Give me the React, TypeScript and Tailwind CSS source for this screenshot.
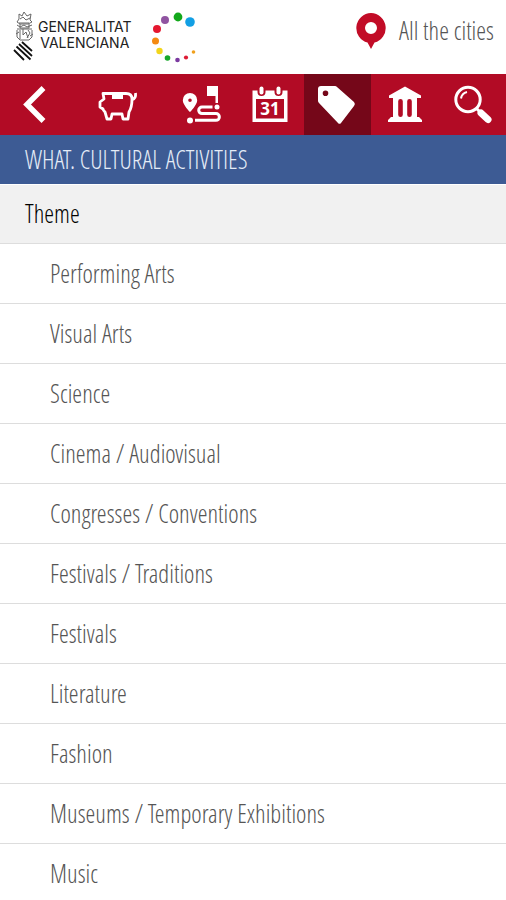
import type { ReactNode } from "react";

const themes = [
  "Performing Arts",
  "Visual Arts",
  "Science",
  "Cinema / Audiovisual",
  "Congresses / Conventions",
  "Festivals / Traditions",
  "Festivals",
  "Literature",
  "Fashion",
  "Museums / Temporary Exhibitions",
  "Music",
];

const dots: [number, number, number, string][] = [
  [13, 10, 4, "#9054a1"],
  [26, 7, 4.4, "#13a81b"],
  [38, 12, 4.8, "#129fe4"],
  [5, 19, 4, "#e5172f"],
  [3.5, 31, 3.5, "#f48a12"],
  [7.5, 41, 3.2, "#f2d51c"],
  [15.5, 48, 2.8, "#17a82b"],
  [25.5, 50, 2.3, "#7b3aa0"],
  [34, 47.5, 2.1, "#dd1c35"],
  [41.5, 42, 1.8, "#f0a01c"],
];

function Crest() {
  return (
    <svg width="22" height="50" viewBox="0 0 22 50" fill="none" stroke="#666" strokeWidth="1" aria-hidden="true">
      <path
        transform="translate(2 -1)"
        d="M5 3l3 2 2-4 3 4 4-2-1 6 2 2-4 2H6l-3-2 2-3zM6 8l3-2 3 3 4-2M5 12h10M3 14l3 2 4-2 3 2 5-2M6 13v4h9v-4M3 18h15M3 19v7l3 3h9l3-3v-7M6 19v9M9 18v6l3-3 2 6M14 19l2 3-3 5M2 23l3-2M16 25l3-2"
      />
      <g stroke="#111" strokeWidth="1.8">
        <path d="M10 30l10 9M7 32l13 12M4.500 34.500l14 13M2 38l10 10" />
      </g>
    </svg>
  );
}

function DotRing() {
  return (
    <svg width="44" height="54" viewBox="0 0 44 54" aria-hidden="true">
      {dots.map(([x, y, r, color]) => (
        <circle key={color} cx={x} cy={y} r={r} fill={color} />
      ))}
    </svg>
  );
}

function Icon({ children }: { children: ReactNode }) {
  return (
    <svg width="40" height="40" viewBox="0 0 40 40" fill="none" stroke="white" aria-hidden="true">
      {children}
    </svg>
  );
}

const tabs = [
  {
    label: "Back",
    size: "flex-[2]",
    icon: <path d="M29.500 3L13 19.500 29.500 36" strokeWidth="5.500" />,
  },
  {
    label: "Free",
    size: "flex-[3]",
    icon: (
      <g strokeWidth="2.800" strokeLinejoin="round">
        <path d="M5 8.500h23c4 0 6 2 6 5.500 0 6-1 10-3 13l-1 7h-5l-1-5H14l-1 5H9l-2-7c-1-1-2-2-2-3l-3-2v-5l4-3zM34 15c3-1 4-3 3.500-7" />
        <path d="M14 12h11" strokeWidth="4" />
      </g>
    ),
  },
  {
    label: "Route",
    size: "flex-[2]",
    icon: (
      <g>
        <path
          d="M8 8a7.200 7.200 0 0 0-7.200 7.200C.8 20 8 27 8 27s7.200-7 7.200-11.800A7.200 7.200 0 0 0 8 8zm0 5.500a1.800 1.800 0 1 1 0 3.600 1.800 1.800 0 0 1 0-3.600z"
          fill="white"
          fillRule="evenodd"
          stroke="none"
        />
        <path d="M25 1h11v17h-2.500v-7H25z" fill="white" stroke="none" />
        <circle cx="35" cy="22" r="2.500" fill="white" stroke="none" />
        <circle cx="8" cy="35.500" r="3" fill="white" stroke="none" />
        <path d="M30.500 22H20a3.300 3.300 0 0 0 0 6.600h14a3.300 3.300 0 0 1 0 6.700H13" strokeWidth="3" />
      </g>
    ),
  },
  {
    label: "When",
    size: "flex-[2]",
    icon: (
      <g>
        <path
          d="M2.500 5.500h5V7a4 4 0 0 0 8 0V5.500h9V7a4 4 0 0 0 8 0V5.500h5V37h-35zM6 14v19.500h28V14z"
          fill="white"
          fillRule="evenodd"
          stroke="none"
        />
        <rect x="9.500" y="1.500" width="4" height="8" rx="2" fill="white" stroke="none" />
        <rect x="26.500" y="1.500" width="4" height="8" rx="2" fill="white" stroke="none" />
        <text
          x="20"
          y="30"
          fill="white"
          stroke="none"
          textAnchor="middle"
          className="font-['Open_Sans',sans-serif] text-[17px] font-bold"
        >
          31
        </text>
      </g>
    ),
  },
  {
    label: "What",
    size: "flex-[2]",
    icon: (
      <path
        d="M4 1h14a3 3 0 0 1 2 1l17 15a3 3 0 0 1 0 4L24 38a2 2 0 0 1-3 0L2 18a3 3 0 0 1-1-2V4a3 3 0 0 1 3-3zm4.500 4.500a2.800 2.800 0 1 0 0 5.600 2.800 2.800 0 0 0 0-5.600z"
        fill="white"
        fillRule="evenodd"
        stroke="none"
      />
    ),
  },
  {
    label: "Where",
    size: "flex-[2]",
    icon: (
      <g fill="white" stroke="none">
        <path d="M20 1.500l16 9V13H4v-2.500zM6 32h28l3 3v2H3v-2z" />
        <path
          d="M8 12h24v21H8zM15.500 14a2.300 2.300 0 0 0-2.300 2.300v13.400a2.300 2.300 0 0 0 4.600 0V16.300A2.300 2.300 0 0 0 15.500 14zM24.500 14a2.300 2.300 0 0 0-2.300 2.300v13.400a2.300 2.300 0 0 0 4.600 0V16.300A2.300 2.300 0 0 0 24.500 14z"
          fillRule="evenodd"
        />
      </g>
    ),
  },
  {
    label: "Search",
    size: "flex-[2]",
    icon: (
      <g>
        <circle cx="16" cy="14.500" r="12.200" strokeWidth="3" />
        <path d="M9 13.500a8 8 0 0 1 6-6.500" strokeWidth="2" />
        <path d="M24.500 23.500l4 4" strokeWidth="3" />
        <path d="M29 28l7 6.500" strokeWidth="7" strokeLinecap="round" />
      </g>
    ),
  },
];

export default function App() {
  return (
    <main className="min-h-screen bg-white font-['Open_Sans_Condensed_Light','Open_Sans_Condensed','Liberation_Sans_Narrow','Open_Sans',sans-serif] text-[25px] font-light">
      <header className="flex h-[74px] items-center justify-between px-3">
        <a href="#home" aria-label="Generalitat Valenciana" className="flex items-center">
          <Crest />
          <span className="ml-1 flex flex-col items-center pb-1 font-['Inter',sans-serif] text-[14px] leading-[16px] font-normal text-[#222]">
            <span>GENERALITAT</span>
            <span>VALENCIANA</span>
          </span>
          <span className="ml-5">
            <DotRing />
          </span>
        </a>
        <button type="button" className="flex items-center gap-3 pb-3 text-[#555]">
          <svg width="32" height="38" viewBox="0 0 32 38" aria-hidden="true">
            <path
              d="M16 1a15 15 0 0 0-3.500 29.500L16 37l3.500-6.500A15 15 0 0 0 16 1zm0 9a6 6 0 1 1 0 12 6 6 0 0 1 0-12z"
              fill="#c20c27"
              fillRule="evenodd"
            />
          </svg>
          All the cities
        </button>
      </header>
      <nav className="flex h-[61px] bg-[#b20b25]">
        {tabs.map((tab) => (
          <button
            key={tab.label}
            type="button"
            aria-label={tab.label}
            className={`flex items-center justify-center ${tab.size} ${tab.label === "What" ? "bg-[#750719]" : ""}`}
          >
            <Icon>{tab.icon}</Icon>
          </button>
        ))}
      </nav>
      <h1 className="flex h-[49px] items-center bg-[#3d5b94] px-[25px] text-[#e4ecf7]">WHAT. CULTURAL ACTIVITIES</h1>
      <h2 className="flex h-[60px] items-center border-t border-b border-t-white border-b-[#ddd] bg-[#f1f1f1] px-[25px] font-medium text-black">
        Theme
      </h2>
      <ul>
        {themes.map((theme) => (
          <li key={theme} className="border-b border-[#ddd] last:border-b-0">
            <a href="#theme" className="flex h-[59px] items-center px-[50px] text-[#555]">
              {theme}
            </a>
          </li>
        ))}
      </ul>
    </main>
  );
}
